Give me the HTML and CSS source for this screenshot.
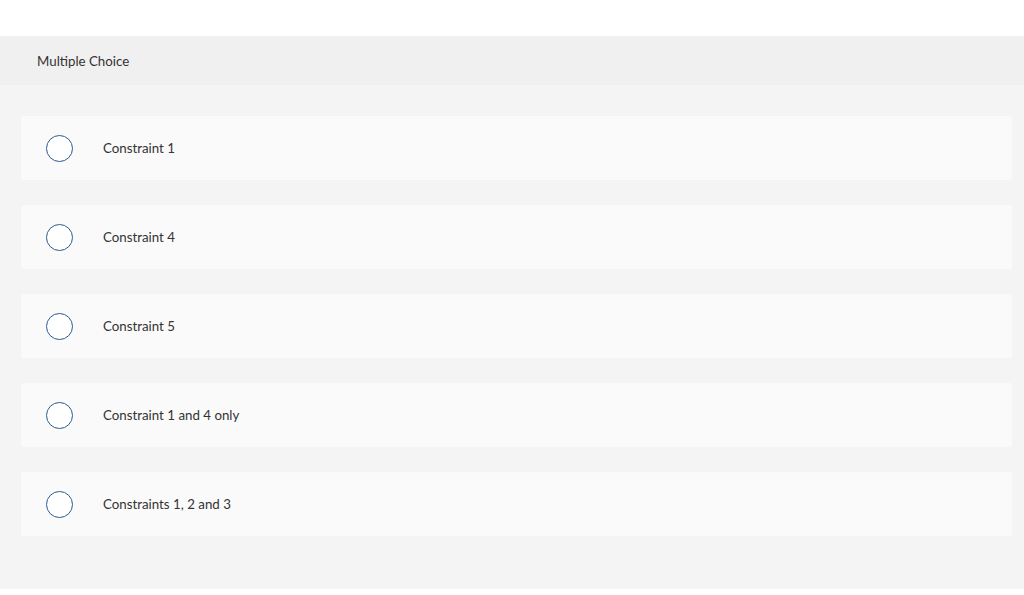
FILE: index.html
```html
<!DOCTYPE html>
<html>
<head>
<meta charset="utf-8">
<link rel="stylesheet" href="styles.css">
</head>
<body>
<div class="top"></div>
<div class="header">Multiple Choice</div>
<div class="options">
  <div class="option"><span class="radio"></span><span class="label">Constraint 1</span></div>
  <div class="option"><span class="radio"></span><span class="label">Constraint 4</span></div>
  <div class="option"><span class="radio"></span><span class="label">Constraint 5</span></div>
  <div class="option"><span class="radio"></span><span class="label">Constraint 1 and 4 only</span></div>
  <div class="option"><span class="radio"></span><span class="label">Constraints 1, 2 and 3</span></div>
</div>
</body>
</html>
```
FILE: styles.css
```css
html, body {
  margin: 0;
  padding: 0;
  background: #ffffff;
  font-family: "Lato", "Liberation Sans", sans-serif;
  color: #333333;
}
.top {
  height: 36px;
}
.header {
  height: 49px;
  background: #f0f0f0;
  padding-left: 37px;
  padding-top: 1px;
  font-size: 13.3px;
  line-height: 48px;
  box-sizing: border-box;
}
.options {
  background: #f4f4f4;
  padding: 31px 12px 53px 21px;
  display: flex;
  flex-direction: column;
  gap: 25px;
}
.option {
  height: 64px;
  background: #fafafa;
  border-radius: 3px;
  display: flex;
  align-items: center;
  padding-left: 25px;
}
.radio {
  width: 25px;
  height: 25px;
  border: 1px solid #2d5a8e;
  border-radius: 50%;
  background: #ffffff;
  flex: none;
}
.label {
  margin-left: 30px;
  font-size: 13.3px;
}
```
